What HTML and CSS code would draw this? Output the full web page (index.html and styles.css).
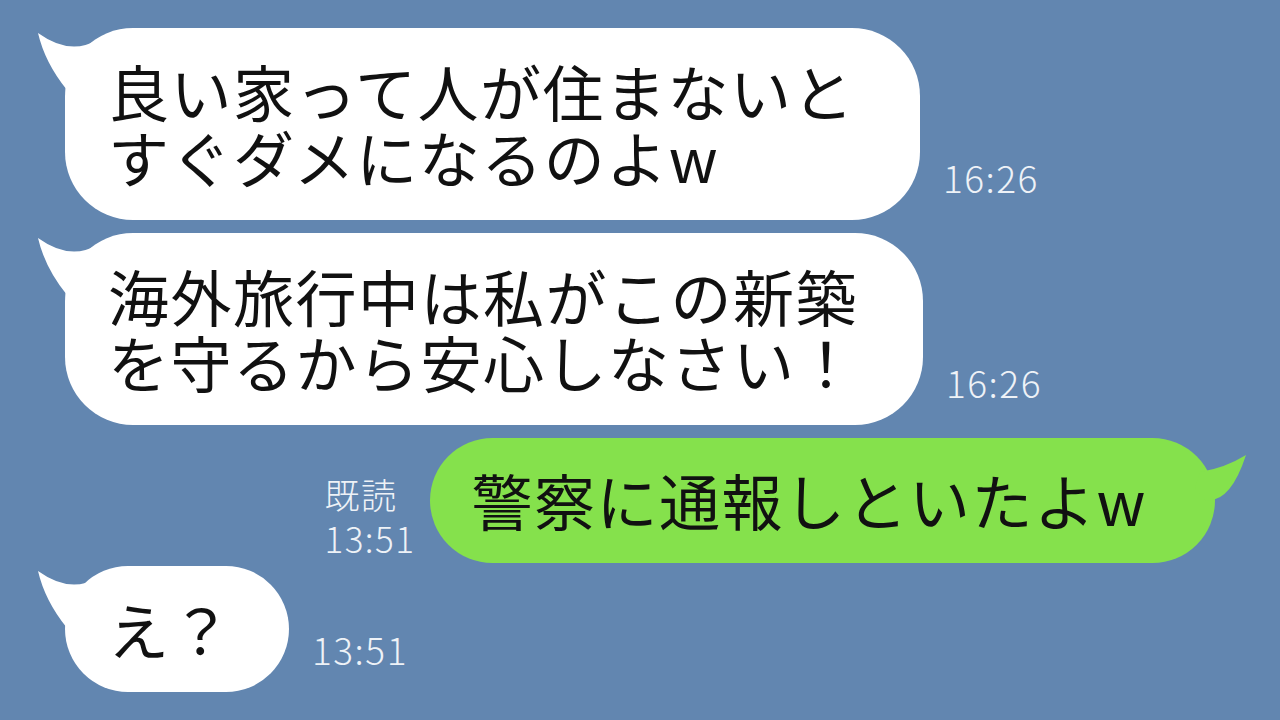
FILE: index.html
```html
<!DOCTYPE html>
<html lang="ja">
<head>
    <meta charset="UTF-8">
    <meta name="viewport" content="width=device-width, initial-scale=1.0">
    <title>トーク</title>
    <link rel="stylesheet" href="styles.css">
</head>
<body>
    <div class="chat">

        <!-- 相手のメッセージ -->
        <div class="row">
            <div class="bubble white">
                <svg class="tail tail-left" viewBox="0 0 80 80" width="80" height="80"><path d="M3 5 Q10 35 32 62 L60 60 L62 12 Q35 28 3 5 Z"/></svg>
                <p class="text">良い家って人が住まないと<br>すぐダメになるのよw</p>
            </div>
            <span class="time">16:26</span>
        </div>

        <div class="row">
            <div class="bubble white">
                <svg class="tail tail-left" viewBox="0 0 80 80" width="80" height="80"><path d="M3 5 Q10 35 32 62 L60 60 L62 12 Q35 28 3 5 Z"/></svg>
                <p class="text">海外旅行中は私がこの新築<br>を守るから安心しなさい！</p>
            </div>
            <span class="time">16:26</span>
        </div>

        <!-- 自分のメッセージ -->
        <div class="row mine">
            <div class="meta">
                <span>既読</span>
                <span>13:51</span>
            </div>
            <div class="bubble green">
                <svg class="tail tail-right" viewBox="0 0 70 80" width="70" height="80"><path d="M61 17 Q45 66 20 62 L10 50 L15 34 Q40 30 61 17 Z"/></svg>
                <p class="text">警察に通報しといたよw</p>
            </div>
        </div>

        <div class="row close">
            <div class="bubble white short">
                <svg class="tail tail-left" viewBox="0 0 80 80" width="80" height="80"><path d="M3 5 Q10 35 32 62 L60 60 L62 12 Q35 28 3 5 Z"/></svg>
                <p class="text">え？</p>
            </div>
            <span class="time">13:51</span>
        </div>

    </div>
</body>
</html>
```

FILE: styles.css
```css
body {
    margin: 0;
    background-color: #6286b0;
    font-family: "Noto Sans CJK JP", "Noto Sans", sans-serif;
}

.chat {
    display: flex;
    flex-direction: column;
    padding: 28px 65px 0 65px;
}

.row {
    display: flex;
    align-items: flex-end;
}

.row + .row {
    margin-top: 13px;
}

.row.close {
    margin-top: 3px;
}

.row.mine {
    justify-content: flex-end;
}

/* 吹き出し */
.bubble {
    position: relative;
    border-radius: 68px;
    padding: 30px 65px 30px 43px;
}

.bubble.white {
    background-color: #fff;
}

.bubble.short {
    padding-right: 56px;
}

.bubble.green {
    background-color: #85e14c;
    border-radius: 63px;
    padding: 29px 68px 30px 42px;
}

.text {
    position: relative;
    margin: 0;
    font-size: 61px;
    line-height: 66px;
    letter-spacing: 1.5px;
    color: #111;
    white-space: nowrap;
}

.tail {
    position: absolute;
    top: 0;
}

.tail-left {
    left: -30px;
    fill: #fff;
}

.tail-right {
    left: calc(100% - 30px);
    fill: #85e14c;
}

/* 時刻と既読 */
.time {
    margin: 0 0 24px 23px;
    font-size: 37px;
    font-weight: 300;
    line-height: 1;
    letter-spacing: 1.5px;
    color: #eef2f7;
}

.meta {
    display: flex;
    flex-direction: column;
    margin: 0 14px 3px 0;
    font-size: 35px;
    font-weight: 300;
    line-height: 44px;
    letter-spacing: 1.5px;
    color: #eef2f7;
}
```
